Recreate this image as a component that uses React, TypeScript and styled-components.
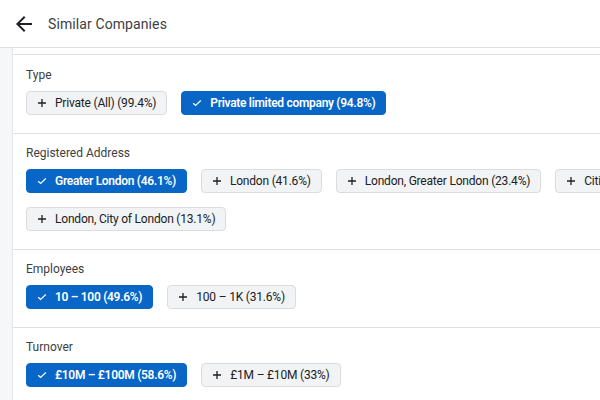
import React from "react";
import styled, { createGlobalStyle } from "styled-components";

const Global = createGlobalStyle`
  html, body {
    margin: 0;
    padding: 0;
    background: #ffffff;
    overflow: hidden;
    font-family: Roboto, "Liberation Sans", Arial, sans-serif;
  }
  * { box-sizing: border-box; }
`;

const Page = styled.div`
  width: 900px;
  height: 400px;
  display: flex;
  flex-direction: column;
`;

const Header = styled.header`
  height: 48px;
  flex: none;
  display: flex;
  align-items: center;
  gap: 12px;
  padding-left: 12px;
  border-bottom: 1px solid #e0e0e0;
  background: #fff;
`;

const BackButton = styled.button`
  width: 24px;
  height: 24px;
  padding: 0;
  border: none;
  background: none;
  display: flex;
  align-items: center;
  justify-content: center;
  color: #202124;
  cursor: pointer;
`;

const Title = styled.h1`
  margin: 0;
  font-size: 14px;
  font-weight: 400;
  color: #3c4043;
  letter-spacing: 0.1px;
`;

const Body = styled.div`
  flex: 1;
  display: flex;
  min-height: 0;
`;

const Gutter = styled.div`
  width: 13px;
  flex: none;
  background: #f6f7f9;
  border-right: 1px solid #e6e6e6;
`;

const Content = styled.main`
  flex: 1;
  padding-top: 6px;
  background: #fff;
`;

const List = styled.div`
  border-top: 1px solid #e0e0e0;
`;

const Section = styled.section`
  padding: 12px 13px 18px;
  border-bottom: 1px solid #e0e0e0;
  & + & {
    padding-top: 11px;
  }
`;

const Label = styled.div`
  font-size: 12px;
  line-height: 16px;
  color: #3c4043;
  margin-bottom: 8px;
`;

const Chips = styled.div`
  display: flex;
  flex-wrap: wrap;
  gap: 14px;
`;

const Chip = styled.button<{ $active?: boolean }>`
  height: 24px;
  display: inline-flex;
  align-items: center;
  gap: 8px;
  padding: 0 10px 0 10px;
  border-radius: 4px;
  font-family: Roboto, "Liberation Sans", Arial, sans-serif;
  font-size: 12px;
  line-height: 16px;
  letter-spacing: ${(p) => (p.$active ? "-0.3px" : "-0.2px")};
  white-space: nowrap;
  cursor: pointer;
  border: 1px solid ${(p) => (p.$active ? "#0866c6" : "#dadce0")};
  background: ${(p) => (p.$active ? "#0866c6" : "#f1f3f4")};
  color: ${(p) => (p.$active ? "#ffffff" : "#202124")};
  font-weight: ${(p) => (p.$active ? 600 : 400)};
`;

const IconBox = styled.span`
  width: 10px;
  height: 10px;
  display: inline-flex;
  align-items: center;
  justify-content: center;
  flex: none;
`;

const PlusIcon = () => (
  <IconBox>
    <svg width="10" height="10" viewBox="0 0 10 10">
      <path d="M5 1v8M1 5h8" stroke="currentColor" strokeWidth="1.3" fill="none" />
    </svg>
  </IconBox>
);

const CheckIcon = () => (
  <IconBox>
    <svg width="10" height="10" viewBox="0 0 10 10">
      <path d="M1.2 5.2l2.4 2.3L8.8 2.5" stroke="currentColor" strokeWidth="1.2" fill="none" />
    </svg>
  </IconBox>
);

type Opt = { label: string; active?: boolean };

const sections: { title: string; options: Opt[] }[] = [
  {
    title: "Type",
    options: [
      { label: "Private (All) (99.4%)" },
      { label: "Private limited company (94.8%)", active: true },
    ],
  },
  {
    title: "Registered Address",
    options: [
      { label: "Greater London (46.1%)", active: true },
      { label: "London (41.6%)" },
      { label: "London, Greater London (23.4%)" },
      { label: "Cities of London and Westminster (15.2%)" },
      { label: "London, City of London (13.1%)" },
    ],
  },
  {
    title: "Employees",
    options: [
      { label: "10 – 100 (49.6%)", active: true },
      { label: "100 – 1K (31.6%)" },
    ],
  },
  {
    title: "Turnover",
    options: [
      { label: "£10M – £100M (58.6%)", active: true },
      { label: "£1M – £10M (33%)" },
    ],
  },
];

export default function App() {
  return (
    <>
      <Global />
      <Page>
        <Header>
          <BackButton aria-label="Back">
            <svg width="24" height="24" viewBox="0 0 24 24">
              <path
                d="M20 11H7.83l5.59-5.59L12 4l-8 8 8 8 1.41-1.41L7.83 13H20v-2z"
                fill="currentColor"
              />
            </svg>
          </BackButton>
          <Title>Similar Companies</Title>
        </Header>
        <Body>
          <Gutter />
          <Content>
            <List>
              {sections.map((s) => (
                <Section key={s.title}>
                  <Label>{s.title}</Label>
                  <Chips>
                    {s.options.map((o) => (
                      <Chip key={o.label} $active={o.active}>
                        {o.active ? <CheckIcon /> : <PlusIcon />}
                        {o.label}
                      </Chip>
                    ))}
                  </Chips>
                </Section>
              ))}
            </List>
          </Content>
        </Body>
      </Page>
    </>
  );
}
